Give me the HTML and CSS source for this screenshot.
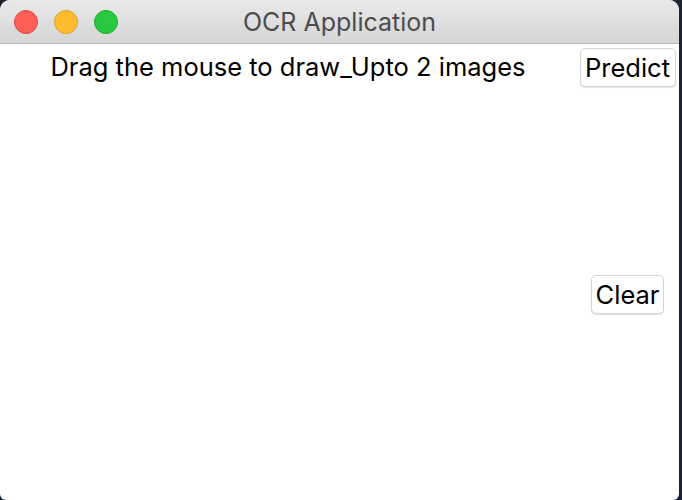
FILE: index.html
```html
<!DOCTYPE html>
<html>
<head>
<meta charset="utf-8">
<link rel="stylesheet" href="styles.css">
</head>
<body>
<div class="window">
  <div class="titlebar">
    <div class="lights">
      <span class="light red"></span>
      <span class="light yellow"></span>
      <span class="light green"></span>
    </div>
    <div class="title">OCR Application</div>
  </div>
  <div class="content">
    <div class="main">
      <div class="label">Drag the mouse to draw_Upto 2 images</div>
    </div>
    <div class="side">
      <button class="btn predict">Predict</button>
      <button class="btn clear">Clear</button>
    </div>
  </div>
</div>
</body>
</html>
```
FILE: styles.css
```css
html, body {
  margin: 0;
  padding: 0;
  background: #1d2431;
  width: 682px;
  height: 500px;
  overflow: hidden;
}
.window {
  width: 679px;
  height: 500px;
  background: #ffffff;
  border-radius: 10px 10px 6px 6px;
  overflow: hidden;
  display: flex;
  flex-direction: column;
  font-family: Inter, "Liberation Sans", sans-serif;
}
.titlebar {
  height: 43px;
  flex: none;
  background: linear-gradient(#e9e9e9, #d5d5d5);
  border-bottom: 1px solid #b9b9b9;
  display: grid;
  grid-template-columns: 1fr;
  align-items: center;
}
.lights, .title {
  grid-area: 1 / 1;
}
.lights {
  display: flex;
  gap: 16px;
  padding-left: 14px;
}
.light {
  width: 22px;
  height: 22px;
  border-radius: 50%;
  border: 1px solid rgba(0,0,0,0.12);
}
.red { background: #fe5f57; border-color: #e0443e; }
.yellow { background: #febc2e; border-color: #dea123; }
.green { background: #28c840; border-color: #1aab29; }
.title {
  text-align: center;
  font-size: 25px;
  line-height: 30px;
  color: #4c4c4c;
  padding-top: 1px;
}
.content {
  flex: 1;
  display: grid;
  grid-template-columns: 576px 103px;
}
.main {
  display: flex;
  justify-content: center;
  padding-top: 7px;
}
.label {
  font-size: 25.5px;
  line-height: 32px;
  color: #000;
  height: 32px;
}
.side {
  display: flex;
  flex-direction: column;
  align-items: center;
  padding-top: 4px;
}
.btn {
  font-family: Inter, "Liberation Sans", sans-serif;
  font-size: 25.5px;
  color: #000;
  background: #fff;
  border: 1px solid #d3d3d3;
  border-radius: 5px;
  box-shadow: 0 1px 1px rgba(0,0,0,0.12);
  height: 39px;
  padding: 0 2px;
  line-height: 36px;
}
.predict { width: 96px; }
.clear { width: 73px; margin-top: 188px; }
```
